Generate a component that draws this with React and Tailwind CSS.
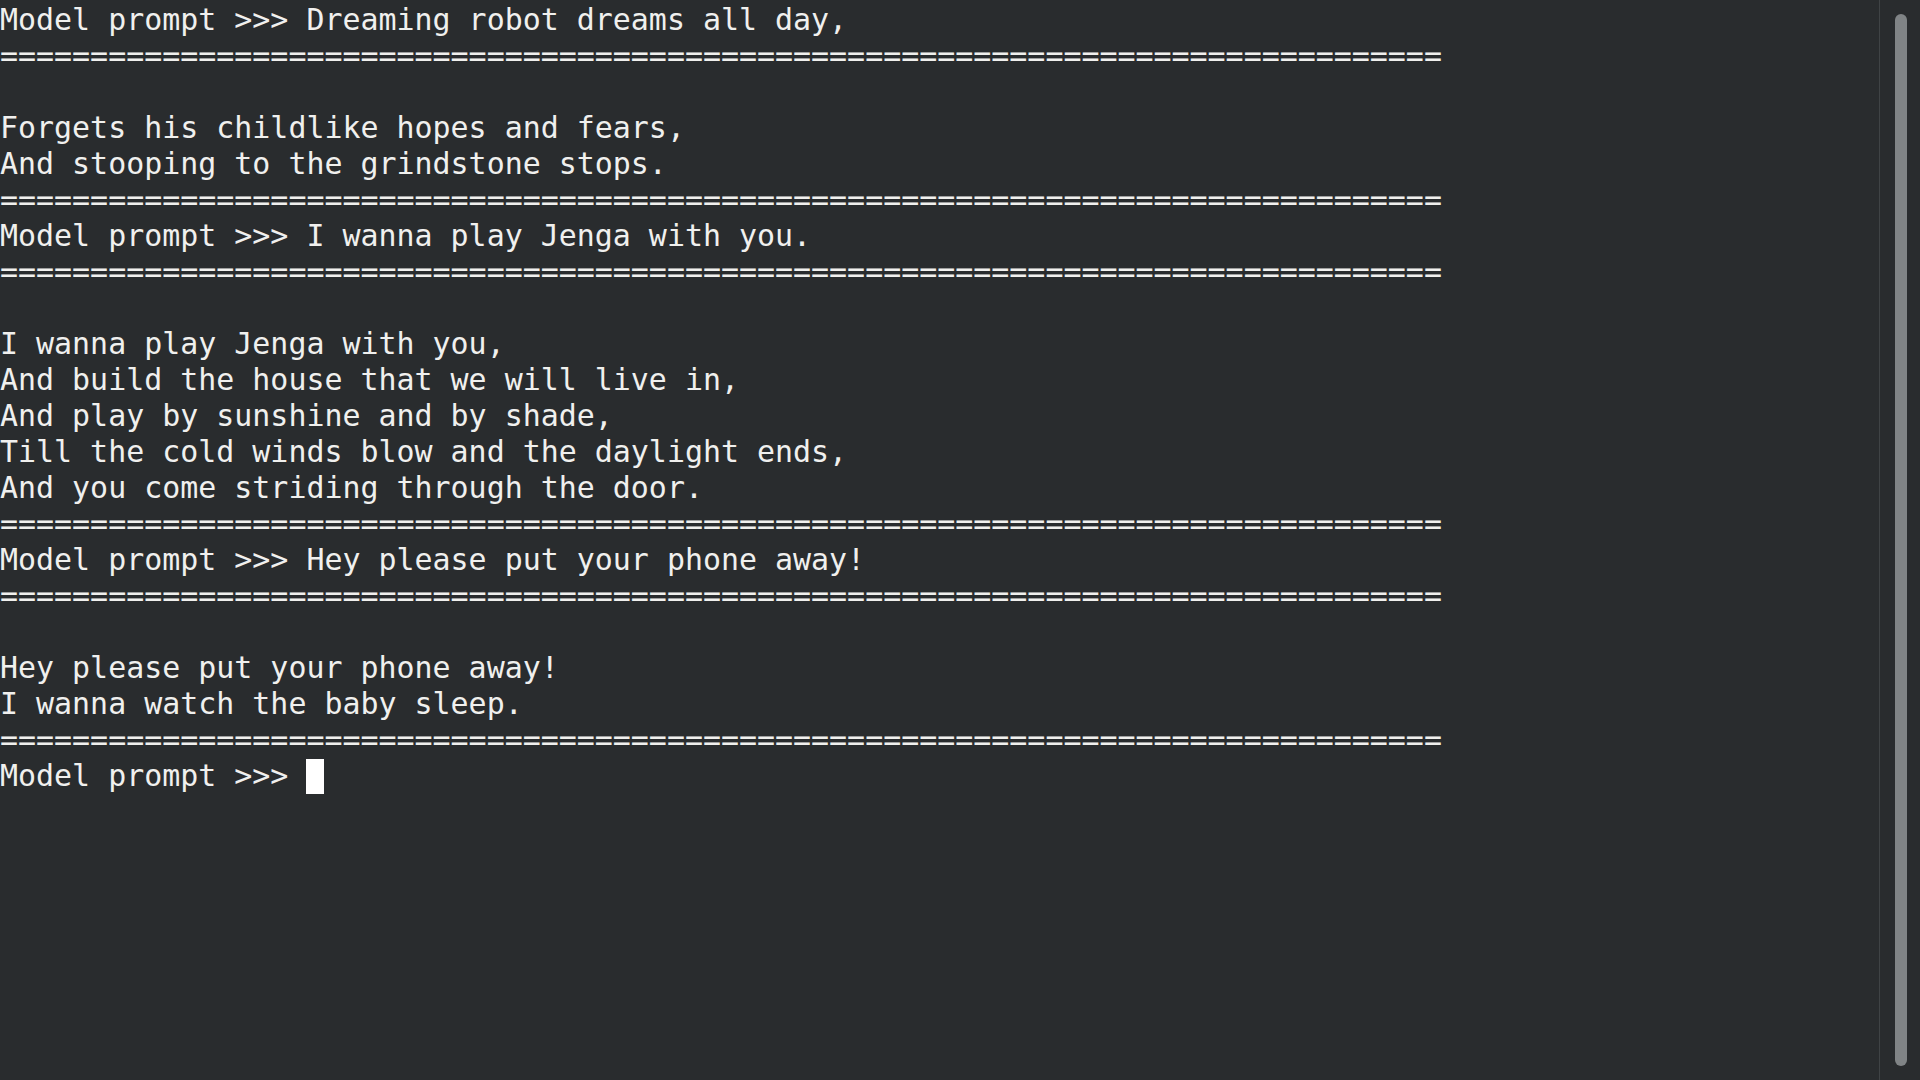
const SEP = '='.repeat(80);

const lines = [
  'Model prompt >>> Dreaming robot dreams all day,',
  SEP,
  '',
  'Forgets his childlike hopes and fears,',
  'And stooping to the grindstone stops.',
  SEP,
  'Model prompt >>> I wanna play Jenga with you.',
  SEP,
  '',
  'I wanna play Jenga with you,',
  'And build the house that we will live in,',
  'And play by sunshine and by shade,',
  'Till the cold winds blow and the daylight ends,',
  'And you come striding through the door.',
  SEP,
  'Model prompt >>> Hey please put your phone away!',
  SEP,
  '',
  'Hey please put your phone away!',
  'I wanna watch the baby sleep.',
  SEP,
];

export default function App() {
  return (
    <div className="w-[1920px] h-[1080px] flex bg-[#292c2e] overflow-hidden">
      {/* Terminal output */}
      <main
        className="flex-1 pt-[2px] text-[29.95px] leading-[36px] text-[#f0f0ee] whitespace-pre"
        style={{ fontFamily: '"DejaVu Sans Mono", monospace' }}
      >
        {lines.map((l, i) => (
          <div key={i} className="h-[36px]">{l}</div>
        ))}
        <div className="h-[36px] flex items-center">
          <span>Model prompt &gt;&gt;&gt; </span>
          <span className="inline-block w-[18px] h-[35px] bg-white" />
        </div>
      </main>

      {/* Scrollbar */}
      <aside className="w-[41px] border-l border-[#3f4345] flex justify-center pl-[2px] py-[14px]">
        <div className="w-[12px] h-full rounded-full bg-[#808486]" />
      </aside>
    </div>
  );
}
